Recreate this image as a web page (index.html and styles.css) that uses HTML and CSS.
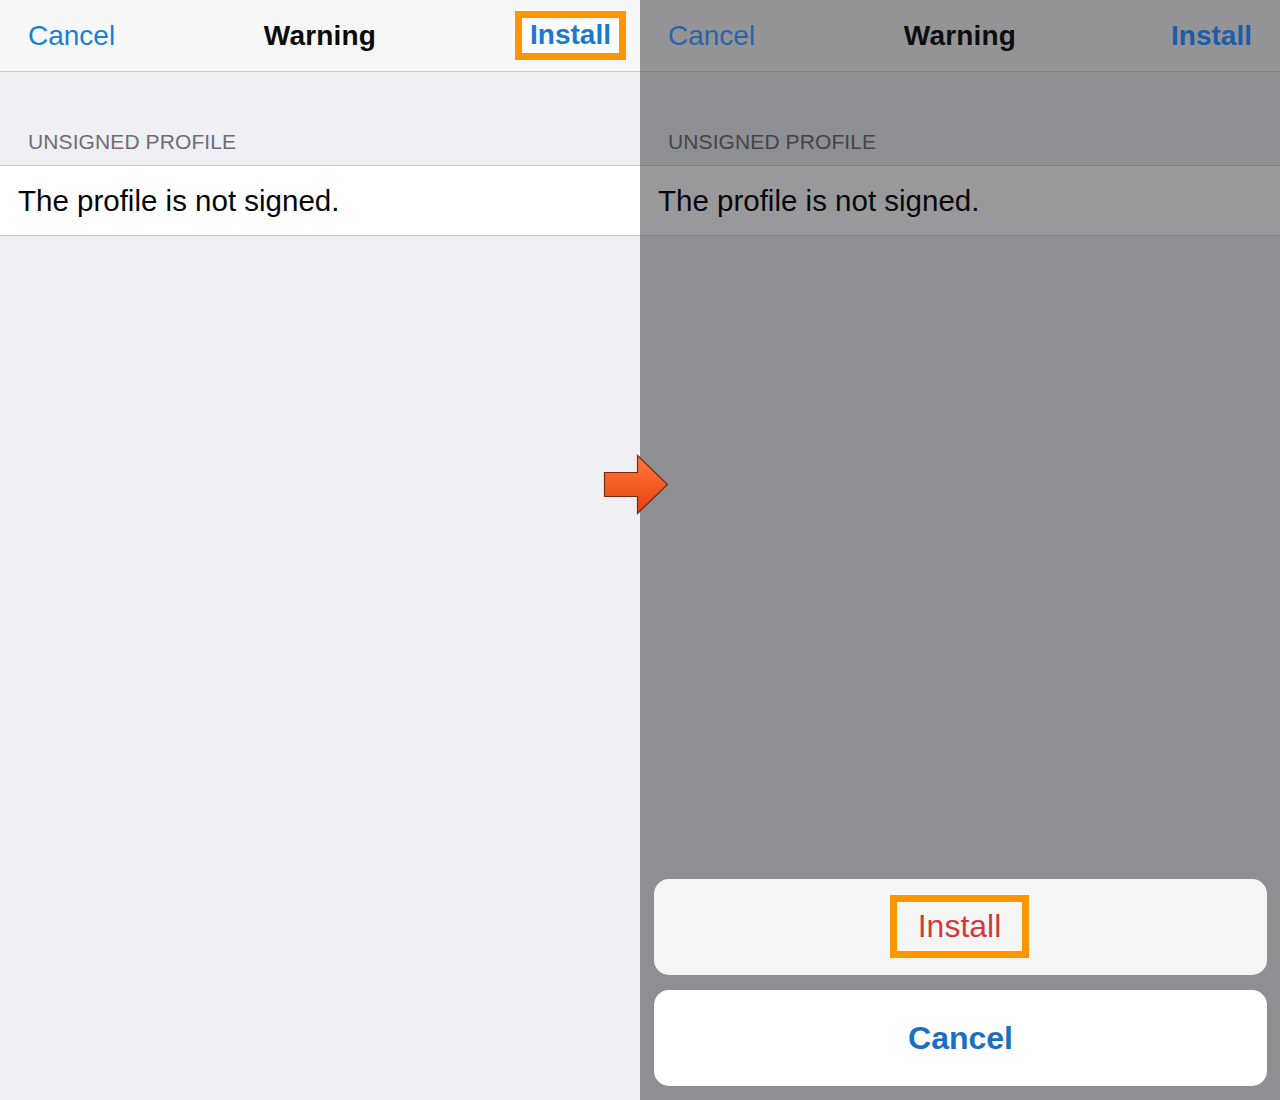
FILE: index.html
```html
<!DOCTYPE html>
<html>
<head>
<meta charset="utf-8">
<link rel="stylesheet" href="styles.css">
</head>
<body>
<div class="stage">
  <section class="pane pane-left">
    <header class="nav">
      <span class="nav-btn">Cancel</span>
      <span class="nav-title">Warning</span>
      <span class="nav-btn nav-install hl">Install</span>
    </header>
    <div class="sec-head">UNSIGNED PROFILE</div>
    <div class="cell">The profile is not signed.</div>
  </section>
  <section class="pane pane-right">
    <header class="nav">
      <span class="nav-btn">Cancel</span>
      <span class="nav-title">Warning</span>
      <span class="nav-btn nav-install">Install</span>
    </header>
    <div class="sec-head">UNSIGNED PROFILE</div>
    <div class="cell">The profile is not signed.</div>
    <div class="spacer"></div>
    <div class="sheet">
      <div class="sheet-btn sheet-install"><span class="hl2">Install</span></div>
      <div class="sheet-btn sheet-cancel">Cancel</div>
    </div>
  </section>
  <svg class="arrow" width="68" height="62" viewBox="0 0 68 62">
    <defs>
      <linearGradient id="ag" x1="0" y1="0" x2="0" y2="1">
        <stop offset="0" stop-color="#ff7a3c"/>
        <stop offset="1" stop-color="#e8400f"/>
      </linearGradient>
    </defs>
    <polygon points="1.5,18.5 34.5,18.5 34.5,1.5 64.5,30.5 34.5,59.5 34.5,42.5 1.5,42.5" fill="url(#ag)" stroke="#7a2a10" stroke-width="1.2"/>
  </svg>
</div>
</body>
</html>
```
FILE: styles.css
```css
html, body {
  margin: 0;
  padding: 0;
}
body {
  font-family: "Liberation Sans", Arial, sans-serif;
  width: 1280px;
  height: 1100px;
  overflow: hidden;
}
.stage {
  position: relative;
  display: flex;
  width: 1280px;
  height: 1100px;
}
.pane {
  width: 640px;
  height: 1100px;
  display: flex;
  flex-direction: column;
}
.pane-left {
  background: #efeff4;
}
.pane-right {
  background: #8e8f93;
}
.nav {
  height: 71px;
  display: flex;
  align-items: center;
  justify-content: space-between;
  padding: 0 14px 0 28px;
  border-bottom: 1px solid #c8c7cc;
  position: relative;
}
.pane-left .nav {
  background: #f7f7f8;
}
.pane-right .nav {
  background: #949497;
  border-bottom-color: #7e7f82;
  padding-right: 28px;
}
.nav-btn {
  font-size: 28px;
  color: #1b7fd4;
}
.pane-right .nav-btn {
  color: #2a64a8;
}
.nav-title {
  position: absolute;
  left: 0;
  right: 0;
  text-align: center;
  font-size: 28px;
  font-weight: bold;
  color: #0a0a0a;
  letter-spacing: 0.2px;
  pointer-events: none;
}
.pane-right .nav-title {
  color: #0d0d0e;
}
.nav-install {
  position: relative;
  z-index: 1;
  font-weight: bold;
}
.pane-right .nav-install {
  color: #1f5ba6;
}
.hl {
  border: 7px solid #ff9600;
  padding: 1px 8px 2px 8px;
  background: #fbfbfc;
  color: #1a79d0;
  margin-top: -1px;
}
.sec-head {
  padding: 58px 0 11px 28px;
  font-size: 21px;
  color: #6d6d72;
  letter-spacing: 0.1px;
}
.pane-right .sec-head {
  color: #444447;
}
.cell {
  height: 69px;
  display: flex;
  align-items: center;
  padding-left: 18px;
  font-size: 29.5px;
  color: #050505;
  background: #ffffff;
  border-top: 1px solid #c8c7cc;
  border-bottom: 1px solid #c8c7cc;
}
.pane-right .cell {
  background: #99999b;
  border-color: #7f8083;
  color: #080808;
}
.spacer {
  flex: 1;
}
.sheet {
  display: flex;
  flex-direction: column;
  gap: 15px;
  padding: 0 13px 14px 14px;
}
.sheet-btn {
  height: 96px;
  border-radius: 15px;
  display: flex;
  align-items: center;
  justify-content: center;
  font-size: 32px;
}
.sheet-install {
  background: #f5f5f6;
  color: #d5393f;
}
.hl2 {
  border: 7px solid #ff9600;
  padding: 6px 21px 6px 21px;
  margin-left: -2px;
  margin-top: -1px;
}
.sheet-cancel {
  background: #ffffff;
  color: #1a6fc2;
  font-weight: bold;
}
.arrow {
  position: absolute;
  left: 603px;
  top: 454px;
}
```
